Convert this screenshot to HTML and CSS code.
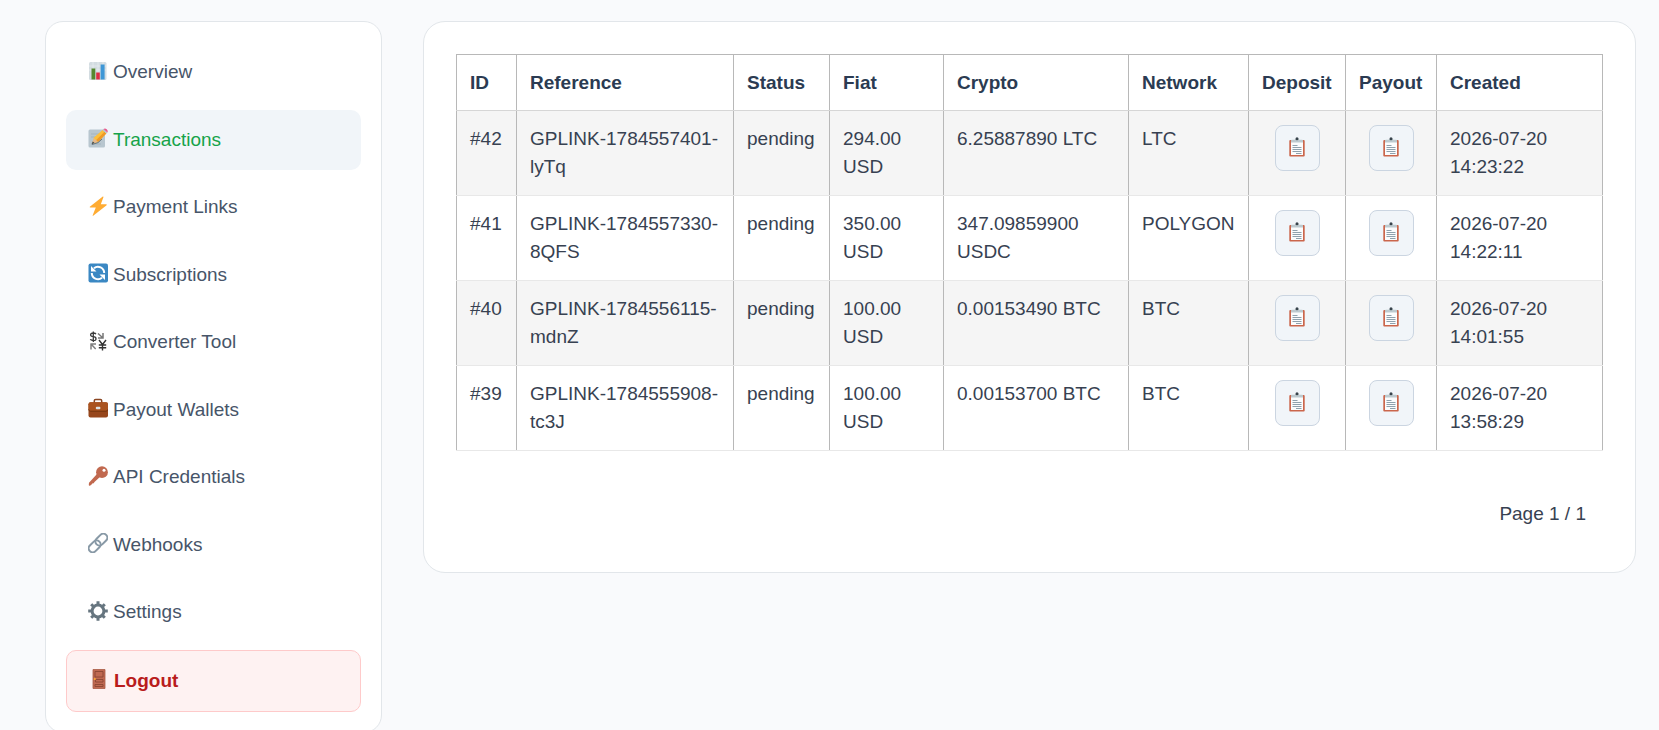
FILE: index.html
```html
<!DOCTYPE html>
<html lang="en">

<head>
  <meta charset="UTF-8">
  <meta name="viewport" content="width=device-width, initial-scale=1">
  <title>Transactions</title>
  <link rel="stylesheet" href="styles.css">
</head>

<body>
  <!-- Clipboard icon, used by the copy buttons -->
  <svg class="sprite" aria-hidden="true">
    <symbol id="clipboard" viewBox="0 0 16 20">
      <rect x="0.3" y="3" width="15.4" height="16.6" rx="1" fill="#cb664c" />
      <rect x="2" y="4" width="12" height="14" fill="#fbfcfd" />
      <path d="M2 5.400V3.600q0-.8 1-.8h2.600Q6 1.800 8 1.800t2.400 1H13q1 0 1 .8v1.800z" fill="#bdcacf" />
      <circle cx="8" cy="1.700" r="1.500" fill="#38434b" />
      <path d="M3.500 8.500h5M3.500 10.500h9M3.500 12.500h9M3.500 14.500h9M7 16.500h5.500" stroke="#8fa1ad" stroke-width="1" />
    </symbol>
  </svg>

  <div class="layout">
    <nav class="sidebar">
      <a href="#overview" class="nav-link">
        <svg class="icon" viewBox="0 0 20 20">
          <rect x="1" y="1" width="17.5" height="18" rx="1.5" fill="#d3dce1" />
          <path d="M1 5h17.5M1 9h17.5M5 1v18M10 1v18M15 1v18" stroke="#e9eef1" stroke-width="0.7" />
          <rect x="3.5" y="7.5" width="3.8" height="11" fill="#55882f" />
          <rect x="8.2" y="11.5" width="3.6" height="7" fill="#dd2e44" />
          <rect x="12.6" y="3.5" width="4" height="15" fill="#3f97d6" />
        </svg>
        Overview
      </a>
      <a href="#transactions" class="nav-link active">
        <svg class="icon" viewBox="0 0 20 20">
          <rect x="0.5" y="1.5" width="16.5" height="18" rx="1.5" fill="#b8c6cf" />
          <path d="M3 6h8M3 9h5M3 16h10" stroke="#a3b4bf" stroke-width="1" />
          <path d="M4 16l2-6.500L14.500 2l3.800 3.600-8.400 8.600z" fill="#fdbf3b" />
          <path d="M8 12.300L16.500 3.800 18.300 5.600l-8.400 8.600z" fill="#f09a26" />
          <path d="M4 16l2-6 4 4z" fill="#e5b98c" />
          <path d="M3.600 16.300l1.200-2.800 1.700 1.600z" fill="#38434b" />
          <path d="M4 16.500q7-1 10-5.500" fill="none" stroke="#66757f" stroke-width="1" />
          <path d="M14.500 2l1-1 3.800 3.600-1 1z" fill="#b7c4cb" />
          <path d="M15.500 1q1.500-1.300 3.200.2t.6 3.400z" fill="#e8588c" />
        </svg>
        Transactions
      </a>
      <a href="#payment-links" class="nav-link">
        <svg class="icon" viewBox="0 0 20 20">
          <path d="M14.8.5L1.800 10.800q-.5.7.5.8h5.500L4.600 19.500q0 .5.600.2L18.600 9.200q.6-.8-.5-.9h-5.300L15.500.9q0-.7-.7-.4z" fill="#ffac33" />
        </svg>
        Payment Links
      </a>
      <a href="#subscriptions" class="nav-link">
        <svg class="icon" viewBox="0 0 20 20">
          <rect x="0.5" y="0.5" width="19.5" height="19" rx="2" fill="#3b88c3" />
          <path d="M6 5.200A6.200 6.200 0 0 1 16.200 10M14 14.800A6.200 6.200 0 0 1 3.800 10" fill="none" stroke="#fff" stroke-width="2" />
          <path d="M3 3v5.500h5.500zM17 17v-5.500h-5.500z" fill="#fff" />
        </svg>
        Subscriptions
      </a>
      <a href="#converter" class="nav-link">
        <svg class="icon" viewBox="0 0 20 20" fill="none">
          <path d="M8 3.200Q7.200 2 5.200 2 2.600 2 2.600 3.800T5.300 5.700 8 7.800 5.300 9.600 2.400 8.200M5.300.5v10.500" stroke="#3a3a3a" stroke-width="1.300" />
          <path d="M11 9l3.500 4.500L18 9M14.500 13.500v6M10.800 14h7.400M10.800 16.700h7.400" stroke="#333" stroke-width="1.400" />
          <path d="M10 2.500l4.500 4M15 2v5h-5" stroke="#777" stroke-width="1.500" />
          <path d="M2.500 13h5.500M3 12.500v6M3.500 13.500l4.200 4.500" stroke="#808080" stroke-width="1.500" />
        </svg>
        Converter Tool
      </a>
      <a href="#wallets" class="nav-link">
        <svg class="icon" viewBox="0 0 20 20">
          <path d="M6.300 5V2.800q0-1.300 1.300-1.300h4.800q1.300 0 1.300 1.300V5" fill="none" stroke="#8a4521" stroke-width="1.500" />
          <rect x="0.5" y="4.300" width="19.5" height="15.200" rx="2" fill="#97471c" />
          <path d="M.5 11V6.300q0-2 2-2H18q2 0 2 2V11q0 2-2 2H2.500q-2 0-2-2z" fill="#aa531f" />
          <path d="M.6 11.400Q1 13.200 2.500 13.200H18q1.500 0 1.900-1.800" fill="none" stroke="#70320f" stroke-width="0.900" />
          <rect x="7.800" y="8.800" width="4.600" height="2.400" rx="1" fill="#dde3e6" />
        </svg>
        Payout Wallets
      </a>
      <a href="#api" class="nav-link">
        <svg class="icon" viewBox="0 0 20 20">
          <path d="M9 8l3.200 2.800-5.700 5.200-.8 1.200-1.500.2-.6 1.200-1.600 1.100q-1.400.3-1.200-1.200l.2-1.800z" fill="#c1694f" />
          <circle cx="14" cy="6.200" r="5.900" fill="#c1694f" />
          <circle cx="16" cy="4.200" r="1.500" fill="#fff" />
        </svg>
        API Credentials
      </a>
      <a href="#webhooks" class="nav-link">
        <svg class="icon" viewBox="0 0 20 20">
          <g fill="none" stroke="#8899a6" stroke-width="2" transform="rotate(-45 10 10)">
            <rect x="-1.500" y="6" width="13.500" height="8" rx="4" />
            <rect x="8" y="6" width="13.500" height="8" rx="4" />
          </g>
        </svg>
        Webhooks
      </a>
      <a href="#settings" class="nav-link">
        <svg class="icon" viewBox="0 0 20 20">
          <g fill="none" stroke="#66757f">
            <circle cx="10" cy="10" r="5.900" stroke-width="3" />
            <path d="M10 .2v3.800M10 16v3.800M.2 10H4M16 10h3.800M3.200 3.200l2.300 2.300M14.500 14.500l2.300 2.300M3.200 16.800l2.300-2.300M14.500 5.500l2.300-2.300" stroke-width="3" />
          </g>
        </svg>
        Settings
      </a>
      <a href="#logout" class="nav-link logout">
        <svg class="icon" viewBox="0 0 20 20">
          <rect x="4" y="0.5" width="12" height="19" fill="#bf6952" />
          <path d="M4 .5h12v19H4z" fill="none" stroke="#a85a44" stroke-width="0.800" />
          <path d="M6 2.500h8V8H6zM6.500 10.500H14V13H6.500zM6 15.500h8v2H6z" fill="none" stroke="#8a4633" stroke-width="0.900" />
          <circle cx="5.800" cy="10" r="1.100" fill="#ffac33" />
        </svg>
        Logout
      </a>
    </nav>

    <main class="card">
      <table class="transactions">
        <colgroup>
          <col class="col-id">
          <col class="col-reference">
          <col class="col-status">
          <col class="col-fiat">
          <col class="col-crypto">
          <col class="col-network">
          <col class="col-deposit">
          <col class="col-payout">
          <col class="col-created">
        </colgroup>
        <thead>
          <tr>
            <th>ID</th>
            <th>Reference</th>
            <th>Status</th>
            <th>Fiat</th>
            <th>Crypto</th>
            <th>Network</th>
            <th>Deposit</th>
            <th>Payout</th>
            <th>Created</th>
          </tr>
        </thead>
        <tbody>
          <tr>
            <td>#42</td>
            <td>GPLINK-1784557401-lyTq</td>
            <td>pending</td>
            <td>294.00 USD</td>
            <td>6.25887890 LTC</td>
            <td>LTC</td>
            <td class="copy"><button type="button" class="copy-btn" aria-label="Copy deposit"><svg><use href="#clipboard" /></svg></button></td>
            <td class="copy"><button type="button" class="copy-btn" aria-label="Copy payout"><svg><use href="#clipboard" /></svg></button></td>
            <td>2026-07-20 14:23:22</td>
          </tr>
          <tr>
            <td>#41</td>
            <td>GPLINK-1784557330-8QFS</td>
            <td>pending</td>
            <td>350.00 USD</td>
            <td>347.09859900 USDC</td>
            <td>POLYGON</td>
            <td class="copy"><button type="button" class="copy-btn" aria-label="Copy deposit"><svg><use href="#clipboard" /></svg></button></td>
            <td class="copy"><button type="button" class="copy-btn" aria-label="Copy payout"><svg><use href="#clipboard" /></svg></button></td>
            <td>2026-07-20 14:22:11</td>
          </tr>
          <tr>
            <td>#40</td>
            <td>GPLINK-1784556115-mdnZ</td>
            <td>pending</td>
            <td>100.00 USD</td>
            <td>0.00153490 BTC</td>
            <td>BTC</td>
            <td class="copy"><button type="button" class="copy-btn" aria-label="Copy deposit"><svg><use href="#clipboard" /></svg></button></td>
            <td class="copy"><button type="button" class="copy-btn" aria-label="Copy payout"><svg><use href="#clipboard" /></svg></button></td>
            <td>2026-07-20 14:01:55</td>
          </tr>
          <tr>
            <td>#39</td>
            <td>GPLINK-1784555908-tc3J</td>
            <td>pending</td>
            <td>100.00 USD</td>
            <td>0.00153700 BTC</td>
            <td>BTC</td>
            <td class="copy"><button type="button" class="copy-btn" aria-label="Copy deposit"><svg><use href="#clipboard" /></svg></button></td>
            <td class="copy"><button type="button" class="copy-btn" aria-label="Copy payout"><svg><use href="#clipboard" /></svg></button></td>
            <td>2026-07-20 13:58:29</td>
          </tr>
        </tbody>
      </table>

      <div class="pagination">Page 1 / 1</div>
    </main>
  </div>
</body>

</html>
```
FILE: styles.css
```css
* {
  box-sizing: border-box;
}

body {
  margin: 0;
  font-family: "Liberation Sans", Arial, Helvetica, sans-serif;
  font-size: 19px;
  line-height: 1.5;
  color: #374151;
  background-color: #f9fafc;
}

.sprite {
  display: none;
}

.layout {
  display: flex;
  align-items: flex-start;
  gap: 41px;
  padding: 21px 23px 0 45px;
}

/* Sidebar */
.sidebar {
  display: flex;
  flex-direction: column;
  flex: 0 0 337px;
  gap: 7px;
  padding: 20px;
  background-color: white;
  border: 1px solid #e2e6ea;
  border-radius: 18px;
}

.nav-link {
  display: flex;
  align-items: center;
  gap: 5px;
  padding: 16px 22px;
  border-radius: 10px;
  color: #475569;
  text-decoration: none;
}

.nav-link.active {
  background-color: #f1f5f9;
  color: #16a34a;
}

.nav-link.logout {
  background-color: #fef2f2;
  border: 1px solid #fecaca;
  color: #b91c1c;
  font-weight: bold;
}

.icon {
  width: 20px;
  height: 20px;
  margin-bottom: 3px;
}

/* Main card */
.card {
  flex: 1;
  min-width: 0;
  padding: 32px;
  background-color: white;
  border: 1px solid #e2e6ea;
  border-radius: 22px;
}

.transactions {
  width: 100%;
  table-layout: fixed;
  border-collapse: collapse;
  line-height: 28px;
}

.transactions th,
.transactions td {
  padding: 14px 13px;
  border: 1px solid #b8b8b8;
  text-align: left;
  vertical-align: top;
}

.transactions th {
  padding-bottom: 13px;
  border-bottom-color: #d6d6d6;
  color: #2b3b52;
}

.transactions td {
  border-top-color: #e8e8e8;
  border-bottom-color: #e8e8e8;
}

.transactions tbody tr:nth-child(odd) {
  background-color: #f5f5f5;
}

.col-id {
  width: 60px;
}

.col-reference {
  width: 217px;
}

.col-status {
  width: 96px;
}

.col-fiat {
  width: 114px;
}

.col-crypto {
  width: 185px;
}

.col-network {
  width: 120px;
}

.col-deposit {
  width: 97px;
}

.col-payout {
  width: 91px;
}

.copy-btn {
  display: block;
  width: 45px;
  height: 46px;
  margin: 0 auto;
  padding: 0 0 3px;
  background-color: #f1f5f9;
  border: 1px solid #cbd5e1;
  border-radius: 8px;
  cursor: pointer;
}

.copy-btn svg {
  display: block;
  width: 16px;
  height: 20px;
  margin: 0 auto;
}

.pagination {
  margin-top: 38px;
  padding: 11px 17px;
  text-align: right;
}
```
